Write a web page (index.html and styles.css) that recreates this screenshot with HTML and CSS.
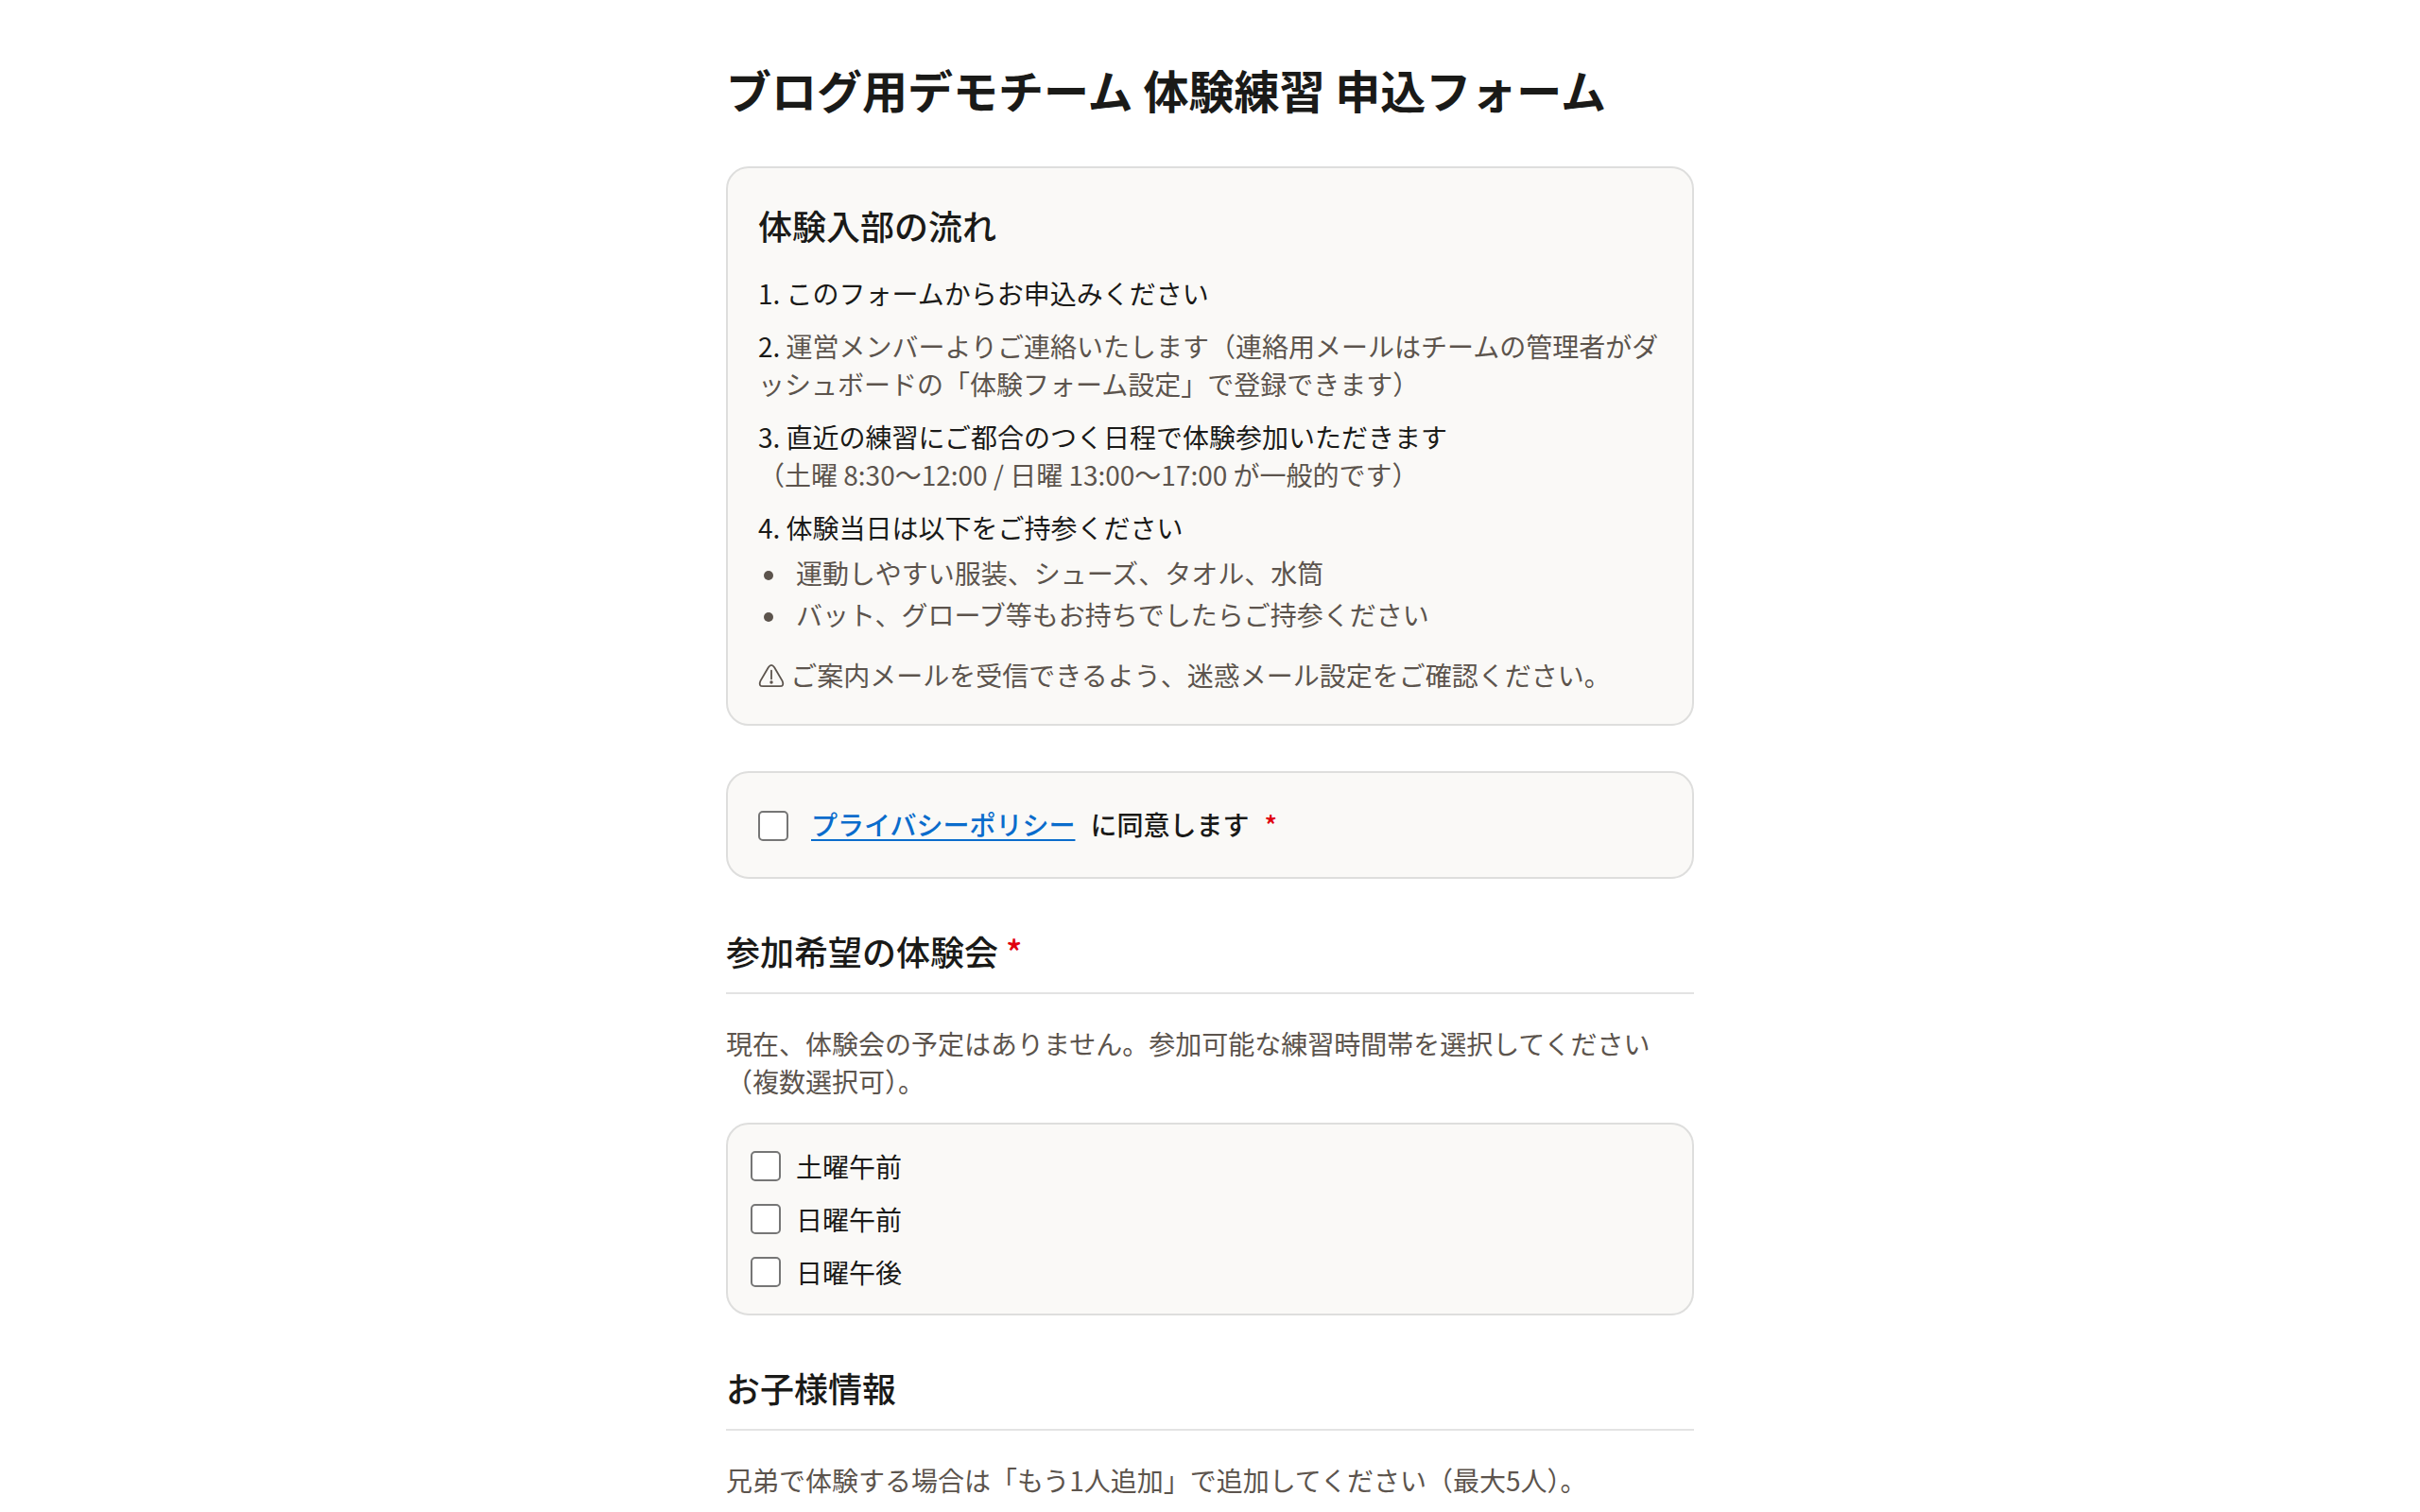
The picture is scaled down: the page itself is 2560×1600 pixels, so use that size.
FILE: index.html
```html
<!doctype html>
<html lang="ja">
<head>
    <meta charset="UTF-8">
    <meta name="viewport" content="width=device-width, initial-scale=1.0">
    <title>体験練習 申込フォーム</title>
    <link rel="stylesheet" href="styles.css">
</head>
<body>
    <main class="page">
        <h1 class="page-title">ブログ用デモチーム 体験練習 申込フォーム</h1>
        <form class="form">
            <!-- 体験入部の流れ -->
            <section class="card guide">
                <h2 class="heading">体験入部の流れ</h2>
                <div class="steps">
                    <p>1. このフォームからお申込みください</p>
                    <p>2. <span class="muted">運営メンバーよりご連絡いたします（連絡用メールはチームの管理者がダッシュボードの「体験フォーム設定」で登録できます）</span></p>
                    <p>3. 直近の練習にご都合のつく日程で体験参加いただきます<br><span class="muted">（土曜 8:30〜12:00 / 日曜 13:00〜17:00 が一般的です）</span></p>
                    <div>
                        <p>4. 体験当日は以下をご持参ください</p>
                        <ul class="items muted">
                            <li>運動しやすい服装、シューズ、タオル、水筒</li>
                            <li>バット、グローブ等もお持ちでしたらご持参ください</li>
                        </ul>
                    </div>
                </div>
                <p class="note muted">
                    <svg class="icon-warn" viewBox="0 0 28 28" aria-hidden="true">
                        <path d="M10.8 4.2Q14 -.4 17.2 4.2L25.6 18.6Q28 24.2 22.8 24.2H5.2Q0 24.2 2.4 18.6Z" fill="none" stroke="currentColor" stroke-width="1.8"/>
                        <path d="M14 7.6v8.8" fill="none" stroke="currentColor" stroke-width="1.8" stroke-linecap="round"/>
                        <circle cx="14" cy="20" r="1.7" fill="currentColor"/>
                    </svg>
                    ご案内メールを受信できるよう、迷惑メール設定をご確認ください。
                </p>
            </section>

            <!-- 同意 -->
            <div class="card agree">
                <input class="check" type="checkbox" id="agree" required>
                <label class="agree-label" for="agree">
                    <a href="#privacy">プライバシーポリシー</a>
                    <span>に同意します</span>
                    <span class="required">*</span>
                </label>
            </div>

            <!-- 参加希望 -->
            <section>
                <h2 class="heading section-heading">参加希望の体験会 <span class="required">*</span></h2>
                <p class="lead muted">現在、体験会の予定はありません。参加可能な練習時間帯を選択してください（複数選択可）。</p>
                <div class="card options">
                    <label class="option"><input class="check" type="checkbox" name="slot" value="sat-am">土曜午前</label>
                    <label class="option"><input class="check" type="checkbox" name="slot" value="sun-am">日曜午前</label>
                    <label class="option"><input class="check" type="checkbox" name="slot" value="sun-pm">日曜午後</label>
                </div>
            </section>

            <!-- お子様情報 -->
            <section>
                <h2 class="heading section-heading">お子様情報</h2>
                <p class="lead muted">兄弟で体験する場合は「もう1人追加」で追加してください（最大5人）。</p>
            </section>
        </form>
    </main>
</body>
</html>
```
FILE: styles.css
```css
*{
    box-sizing: border-box;
    margin: 0;
    padding: 0;
}
body{
    background-color: #fff;
    color: #1a1a18;
    font-family: "Noto Sans CJK JP", sans-serif;
    font-size: 28px;
    line-height: 40px;
}
.page{
    max-width: 1024px;
    margin: 0 auto;
    padding-top: 64px;
}
.page-title{
    margin-bottom: 52px;
    font-size: 48px;
    font-weight: 700;
    line-height: 60px;
}
.form{
    display: flex;
    flex-direction: column;
    gap: 48px;
}
.card{
    border: 2px solid #dededd;
    border-radius: 24px;
    background-color: #faf9f7;
}
.heading{
    font-size: 36px;
    font-weight: 500;
    line-height: 56px;
}
.muted{
    color: #5c544d;
}
.required{
    color: #e0000f;
}

/* 体験入部の流れ */
.guide{
    padding: 32px;
}
.steps{
    display: flex;
    flex-direction: column;
    gap: 16px;
    margin: 24px 0;
}
.items{
    display: flex;
    flex-direction: column;
    gap: 4px;
    margin-top: 8px;
    padding-left: 6px;
    list-style: none;
}
.items li{
    display: flex;
    gap: 24px;
}
.items li::before{
    content: "";
    flex: none;
    width: 10px;
    height: 10px;
    margin-top: 18px;
    border-radius: 50%;
    background-color: currentColor;
}
.icon-warn{
    width: 28px;
    height: 28px;
    vertical-align: -4px;
}

/* チェックボックス */
.check{
    flex: none;
    width: 32px;
    height: 32px;
    border: 2px solid #767676;
    border-radius: 5px;
    background-color: #fff;
    appearance: none;
}
.check:checked{
    background-color: #0a6ccc;
}
.agree{
    display: flex;
    align-items: flex-start;
    gap: 24px;
    padding: 34px 32px 36px;
}
.agree .check{
    margin-top: 6px;
}
.agree-label{
    display: flex;
    gap: 16px;
    font-weight: 500;
}
.agree-label a{
    color: #0a6ccc;
    text-decoration-thickness: 2px;
    text-underline-offset: 4px;
}

/* セクション */
.section-heading{
    margin-bottom: 32px;
    padding-bottom: 16px;
    border-bottom: 2px solid #e3e3e3;
}
.options{
    display: flex;
    flex-direction: column;
    gap: 16px;
    margin-top: 24px;
    padding: 24px;
}
.option{
    display: flex;
    align-items: center;
    gap: 16px;
}
```
